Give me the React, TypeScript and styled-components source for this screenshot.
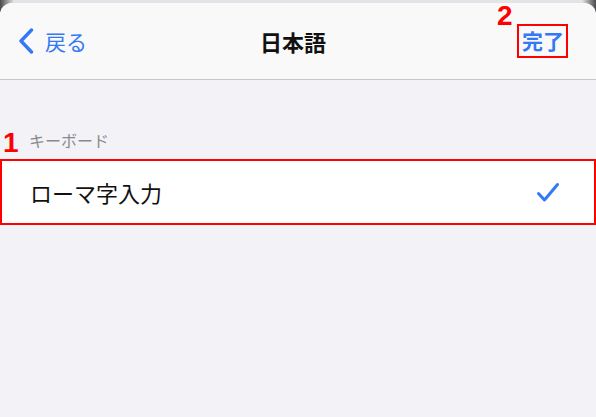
import React from "react";
import styled, { createGlobalStyle } from "styled-components";

const Global = createGlobalStyle`
  html, body { margin: 0; padding: 0; }
  body {
    width: 596px;
    height: 417px;
    overflow: hidden;
    font-family: "Noto Sans CJK JP", "Noto Sans", "Liberation Sans", sans-serif;
  }
`;

const Screen = styled.div`
  width: 596px;
  height: 417px;
  box-sizing: border-box;
  padding-top: 3px;
  background: linear-gradient(to right, #4a4a4c 0, #e4e4e8 14px, #e4e4e8 calc(100% - 14px), #4a4a4c 100%);
  display: flex;
  flex-direction: column;
`;

const Sheet = styled.div`
  flex: 1;
  display: flex;
  flex-direction: column;
  background: #f2f2f7;
  border-radius: 12px 12px 0 0;
`;

const NavBar = styled.header`
  height: 77px;
  box-sizing: border-box;
  border-bottom: 1px solid #c6c6c9;
  background: #f9f9fa;
  border-radius: 12px 12px 0 0;
  display: grid;
  grid-template-columns: 1fr auto 1fr;
  align-items: center;
  padding: 0 28px 0 18px;
  position: relative;
`;

const BackButton = styled.div`
  display: flex;
  align-items: center;
  gap: 11px;
  color: #3478f6;
  font-size: 21px;
  justify-self: start;
`;

const Title = styled.div`
  font-size: 22px;
  font-weight: 700;
  color: #111;
`;

const DoneBox = styled.div`
  justify-self: end;
  border: 2px solid #ff0000;
  padding: 1px 2px 3px 3px;
  color: #3478f6;
  font-size: 21px;
  font-weight: 700;
  line-height: 26px;
  position: relative;
`;

const Marker = styled.span<{ $top: number; $left: number }>`
  position: absolute;
  top: ${(p) => p.$top}px;
  left: ${(p) => p.$left}px;
  color: #ff0000;
  font-family: "Liberation Sans", Arial, sans-serif;
  font-weight: 700;
  font-size: 28px;
  line-height: 22px;
`;

const Content = styled.main`
  position: relative;
  padding-top: 50px;
`;

const SectionHeader = styled.div`
  font-size: 16px;
  line-height: 20px;
  color: #8a8a8e;
  padding-left: 29px;
  margin-bottom: 9px;
`;

const Row = styled.div`
  height: 66px;
  box-sizing: border-box;
  border: 2px solid #ff0000;
  background: #fff;
  display: flex;
  align-items: center;
  justify-content: space-between;
  padding: 0 34px 0 28px;
`;

const RowLabel = styled.span`
  font-size: 22px;
  color: #111;
`;

export default function App() {
  return (
    <>
      <Global />
      <Screen>
        <Sheet>
          <NavBar>
            <BackButton>
              <svg width="16" height="26" viewBox="0 0 16 26">
                <path d="M13.5 2 L3 13 L13.5 24" fill="none" stroke="#3478f6" strokeWidth="3.4" strokeLinecap="round" strokeLinejoin="round" />
              </svg>
              <span>戻る</span>
            </BackButton>
            <Title>日本語</Title>
            <DoneBox>
              完了
              <Marker $top={-21} $left={-22}>2</Marker>
            </DoneBox>
          </NavBar>
          <Content>
            <Marker $top={52} $left={3}>1</Marker>
            <SectionHeader>キーボード</SectionHeader>
            <Row>
              <RowLabel>ローマ字入力</RowLabel>
              <svg width="24" height="21" viewBox="0 0 24 21">
                <path d="M2.5 11.5 L8.5 18 L21.5 2.5" fill="none" stroke="#3478f6" strokeWidth="3" strokeLinecap="round" strokeLinejoin="round" />
              </svg>
            </Row>
          </Content>
        </Sheet>
      </Screen>
    </>
  );
}
